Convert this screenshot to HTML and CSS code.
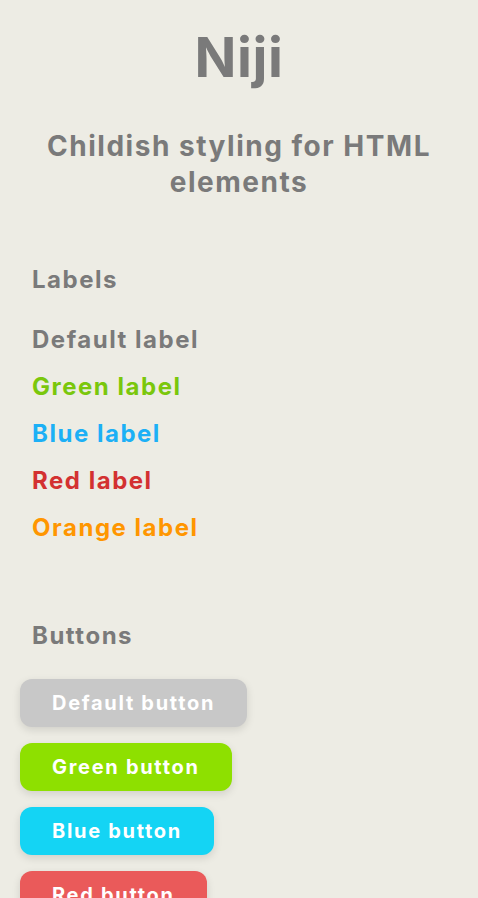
FILE: index.html
```html
<!DOCTYPE html>
<html>
<head>
<meta charset="utf-8">
<link rel="stylesheet" href="styles.css">
</head>
<body>
<header class="hero">
  <h1 class="title">Niji</h1>
  <h2 class="subtitle">Childish styling for HTML elements</h2>
</header>
<section class="section">
  <h3 class="section-title">Labels</h3>
  <div class="labels">
    <span class="label">Default label</span>
    <span class="label label-green">Green label</span>
    <span class="label label-blue">Blue label</span>
    <span class="label label-red">Red label</span>
    <span class="label label-orange">Orange label</span>
  </div>
</section>
<section class="section section-buttons">
  <h3 class="section-title">Buttons</h3>
  <div class="buttons">
    <button class="btn">Default button</button>
    <button class="btn btn-green">Green button</button>
    <button class="btn btn-blue">Blue button</button>
    <button class="btn btn-red">Red button</button>
  </div>
</section>
</body>
</html>
```
FILE: styles.css
```css
html, body {
  margin: 0;
  padding: 0;
}
body {
  background: #edece4;
  color: #7a7a7a;
  font-family: Inter, "Noto Sans", sans-serif;
  font-weight: 700;
  letter-spacing: 0.095em;
}
.hero {
  display: flex;
  flex-direction: column;
  align-items: center;
  padding-top: 23px;
}
.title {
  margin: 0;
  font-size: 55px;
  line-height: 68px;
  font-weight: 700;
  letter-spacing: 0.01em;
}
.subtitle {
  margin: 37px 0 0;
  padding: 0 30px;
  text-align: center;
  font-size: 28px;
  line-height: 36px;
  font-weight: 700;
}
.section {
  padding: 0 32px;
  margin-top: 64px;
}
.section-buttons {
  margin-top: 76px;
}
.section-title {
  margin: 0;
  font-size: 24px;
  line-height: 32px;
  font-weight: 700;
}
.labels {
  display: flex;
  flex-direction: column;
  align-items: flex-start;
  gap: 15px;
  margin-top: 28px;
}
.label {
  font-size: 24px;
  line-height: 32px;
}
.label-green { color: #7ac70c; }
.label-blue { color: #1cb0f6; }
.label-red { color: #d33131; }
.label-orange { color: #ff9600; }
.buttons {
  display: flex;
  flex-direction: column;
  align-items: flex-start;
  gap: 16px;
  margin: 27px 0 0 -12px;
}
.btn {
  font-family: inherit;
  font-weight: 700;
  font-size: 20px;
  letter-spacing: 0.085em;
  color: #fff;
  background: #c8c8c8;
  border: none;
  border-radius: 12px;
  height: 48px;
  padding: 0 32px;
  box-shadow: 0 3px 8px rgba(0,0,0,0.12);
}
.btn-green { background: #8ee000; }
.btn-blue { background: #14d4f4; }
.btn-red { background: #ea5a5a; }
```
